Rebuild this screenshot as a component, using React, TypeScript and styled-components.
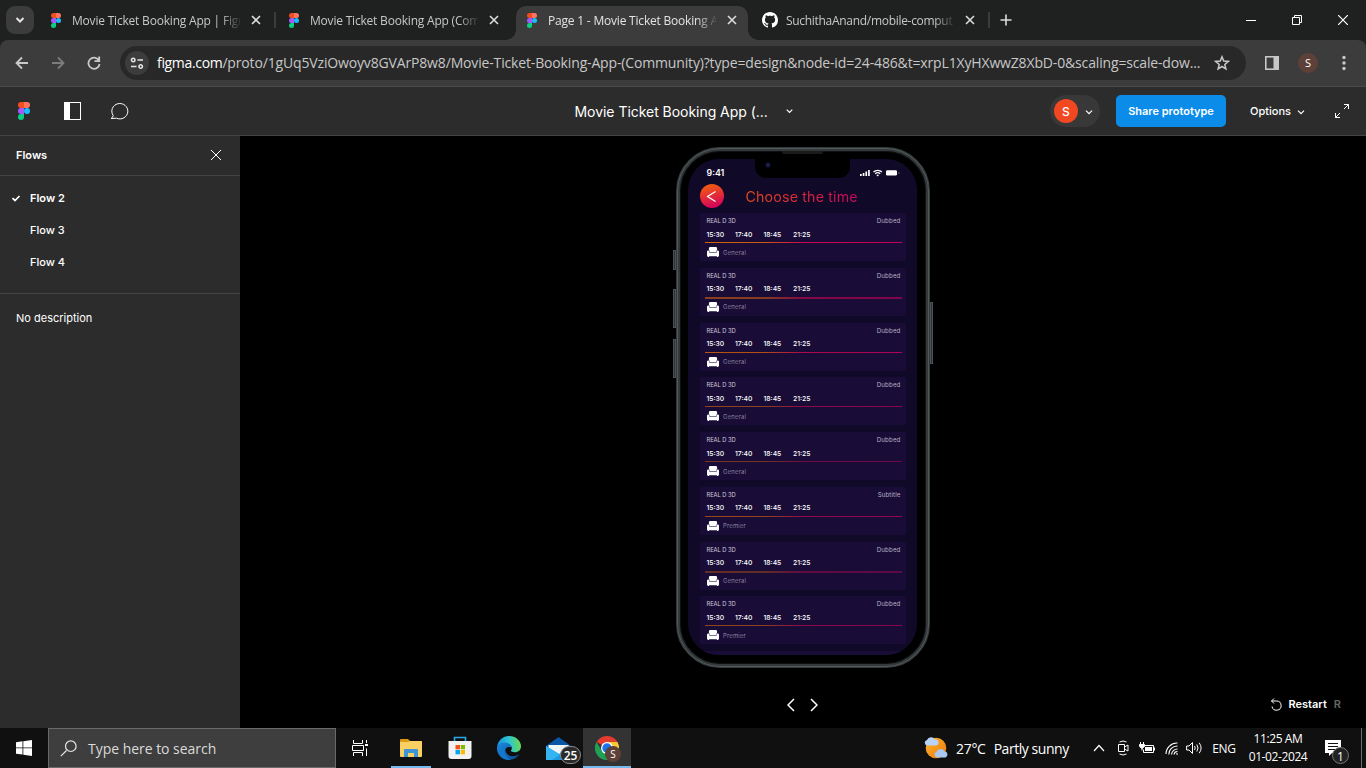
import React from "react";
import styled, { createGlobalStyle, css } from "styled-components";

const ui = `"Open Sans", "Noto Sans", sans-serif`;
const inter = `Inter, "Liberation Sans", sans-serif`;

const GlobalStyle = createGlobalStyle`
  * { box-sizing: border-box; }
  body { margin: 0; background: #000; overflow: hidden; }
  svg { display: block; flex: none; }
`;

const Window = styled.div`
  display: flex;
  flex-direction: column;
  width: 1366px;
  height: 768px;
  overflow: hidden;
  font-family: ${ui};
`;

const Label = styled.span<{ $size: number; $color?: string; $weight?: number; $track?: number; $font?: string }>`
  font-family: ${(p) => p.$font ?? ui};
  font-size: ${(p) => p.$size}px;
  font-weight: ${(p) => p.$weight ?? 400};
  letter-spacing: ${(p) => p.$track ?? 0}px;
  color: ${(p) => p.$color ?? "#fff"};
  white-space: nowrap;
`;

/* ---------- browser tabs ---------- */

const TabStrip = styled.div`
  display: flex;
  height: 40px;
  background: #1f2120;
`;

const TabSearch = styled.div`
  display: grid;
  place-items: center;
  width: 28px;
  height: 28px;
  margin: 6px 4px 0 6px;
  border-radius: 9px;
  background: #3c3c3c;
`;

const Tab = styled.div<{ $active?: boolean; $divider?: boolean }>`
  display: flex;
  align-items: center;
  width: 238px;
  height: 40px;
  padding: 0 0 0 10px;
  position: relative;
  ${(p) =>
    p.$divider &&
    css`
      &::after {
        content: "";
        width: 2px;
        height: 16px;
        margin-left: 10px;
        background: #3c3c3c;
      }
    `}
  ${(p) =>
    p.$active &&
    css`
      z-index: 0;
      &::before {
        content: "";
        position: absolute;
        z-index: -1;
        inset: 6px 4px 0 2px;
        border-radius: 10px 10px 0 0;
        background: #3c3c3c;
      }
    `}
`;

const TabFoot = styled.div<{ $side: "left" | "right" }>`
  position: absolute;
  bottom: 0;
  ${(p) => (p.$side === "left" ? "left: -8px" : "right: -6px")};
  width: 10px;
  height: 10px;
  background: radial-gradient(circle at ${(p) => (p.$side === "left" ? "0 0" : "100% 0")}, transparent 9.5px, #3c3c3c 10px);
`;

const TabTitle = styled.div`
  width: 168px;
  margin-left: 8px;
  overflow: hidden;
  white-space: nowrap;
  line-height: 20px;
  mask-image: linear-gradient(90deg, #000 148px, transparent 170px);
`;

const TabClose = styled.div`
  display: grid;
  place-items: center;
  width: 16px;
  margin-left: 8px;
`;

const NewTab = styled.div`
  display: grid;
  place-items: center;
  width: 32px;
  height: 40px;
`;

const WindowButtons = styled.div`
  display: flex;
  margin-left: auto;
  & > div {
    display: grid;
    place-items: center;
    width: 46px;
    height: 40px;
  }
`;

/* ---------- address bar ---------- */

const ToolbarBack = styled.div`
  background: #1f2120;
  flex: none;
`;

const Toolbar = styled.div`
  display: flex;
  align-items: center;
  height: 47px;
  padding: 0 4px 1px;
  border-radius: 8px 8px 0 0;
  border-bottom: 1px solid #4a4a4a;
  background: #3c3c3c;
`;

const ToolButton = styled.div`
  display: grid;
  place-items: center;
  width: 36px;
  height: 34px;
`;

const Omnibox = styled.div`
  display: flex;
  align-items: center;
  width: 1126px;
  height: 34px;
  margin: 0 8px;
  padding: 0 16px 0 5px;
  border-radius: 17px;
  background: #282828;
`;

const SiteInfo = styled.div`
  display: grid;
  place-items: center;
  width: 24px;
  height: 24px;
  margin-right: 8px;
  border-radius: 50%;
  background: #3c3c3c;
`;

const Url = styled.div`
  flex: 1;
  white-space: nowrap;
  line-height: 24px;
`;

const Avatar = styled.div<{ $d: number; $bg: string }>`
  display: grid;
  place-items: center;
  width: ${(p) => p.$d}px;
  height: ${(p) => p.$d}px;
  border-radius: 50%;
  background: ${(p) => p.$bg};
`;

/* ---------- prototype header ---------- */

const Header = styled.header`
  display: flex;
  align-items: center;
  flex: none;
  height: 49px;
  padding: 0 17px 0 18px;
  border-bottom: 1px solid #444;
  background: #2c2c2c;
`;

const HeaderTools = styled.div`
  display: flex;
  align-items: center;
  width: 556px;
`;

const ToolGap = styled.div<{ $w: number }>`
  width: ${(p) => p.$w}px;
`;

const FileName = styled.div`
  display: flex;
  align-items: center;
  gap: 17px;
  width: 476px;
`;

const FileTitle = styled.div`
  width: 195px;
  line-height: 22px;
  padding: 1px 0 0 0.5px;
`;

const UserPill = styled.div`
  display: flex;
  align-items: center;
  gap: 7px;
  width: 50px;
  height: 32px;
  padding-left: 4px;
  border-radius: 16px;
  background: #383838;
`;

const ShareButton = styled.div`
  display: grid;
  place-items: center;
  width: 110px;
  height: 32px;
  margin: 0 24px 0 16px;
  border-radius: 5px;
  background: #0c8ce9;
`;

const Options = styled.div`
  display: flex;
  align-items: center;
  gap: 6px;
  margin-right: auto;
`;

const Caret = styled.div`
  padding-top: 2px;
`;

/* ---------- workspace ---------- */

const Workspace = styled.div`
  display: flex;
  flex: none;
  height: 592px;
`;

const Sidebar = styled.aside`
  width: 240px;
  background: #2c2c2c;
`;

const SidebarHead = styled.div`
  display: flex;
  align-items: center;
  justify-content: space-between;
  height: 40px;
  padding: 0 18px 1px 16px;
  border-bottom: 1px solid #444;
`;

const FlowList = styled.div`
  height: 118px;
  padding-top: 6px;
  border-bottom: 1px solid #444;
`;

const FlowRow = styled.div`
  display: flex;
  align-items: center;
  height: 32px;
  padding-left: 11px;
`;

const FlowTick = styled.div`
  width: 19px;
`;

const Description = styled.div`
  padding: 16px;
  line-height: 16px;
  display: flex;
`;

const Stage = styled.main`
  display: flex;
  flex-direction: column;
  align-items: center;
  flex: 1;
  padding-top: 11px;
  background: #000;
`;

const Phone = styled.div`
  position: relative;
  width: 254px;
  height: 521px;
  padding: 8px;
  margin-right: 1px;
  border: 4px solid #33393b;
  border-radius: 44px;
  background: #000;
  box-shadow: inset 0 0 0 1px #0d0f10;
  &::before {
    content: "";
    position: absolute;
    inset: -3px;
    border: 1px solid #50585a;
    border-radius: 43px;
  }
`;

const SideKey = styled.div<{ $side: "left" | "right"; $top: number; $h: number }>`
  position: absolute;
  ${(p) => p.$side}: -7px;
  top: ${(p) => p.$top}px;
  width: 3px;
  height: ${(p) => p.$h}px;
  border: 1px solid #4c5254;
  background: #2c3133;
`;

const Speaker = styled.div`
  position: absolute;
  top: 0;
  left: 102px;
  width: 41px;
  height: 3px;
  border-radius: 0 0 2px 2px;
  background: #1b1b1b;
`;

const Screen = styled.div`
  position: relative;
  display: flex;
  flex-direction: column;
  width: 229px;
  height: 496px;
  overflow: hidden;
  border-radius: 31px;
  background: #110928;
`;

const Notch = styled.div`
  position: absolute;
  top: 0;
  left: 67px;
  width: 95px;
  height: 19px;
  border-radius: 0 0 11px 11px;
  background: #000;
`;

const Lens = styled.div`
  position: absolute;
  top: 3px;
  left: 10px;
  width: 6px;
  height: 6px;
  border-radius: 50%;
  background: radial-gradient(circle, #1c2460 15%, #0b0b20 60%, #08080c);
`;

const StatusBar = styled.div`
  display: flex;
  align-items: center;
  justify-content: space-between;
  flex: none;
  height: 25px;
  padding: 2px 16px 0 19px;
`;

const ScreenHead = styled.div`
  display: flex;
  align-items: center;
  flex: none;
  height: 24px;
  padding-left: 12px;
`;

const BackButton = styled.div`
  display: grid;
  place-items: center;
  width: 24px;
  height: 24px;
  margin-right: 22px;
  border-radius: 50%;
  background: linear-gradient(165deg, #f5600d 5%, #d4005c 90%);
`;

const ScreenTitle = styled.div`
  font-family: ${inter};
  font-size: 14.2px;
  font-weight: 400;
  letter-spacing: 0.18px;
  line-height: 20px;
  padding-top: 2px;
  color: transparent;
  background: linear-gradient(90deg, #e04a20, #dc2a38 45%, #c3085a);
  background-clip: text;
  -webkit-background-clip: text;
  white-space: nowrap;
`;

const Cards = styled.div`
  display: flex;
  flex-direction: column;
  flex: none;
  gap: 6.75px;
  padding: 5px 11px 0 12px;
`;

const Card = styled.div`
  display: flex;
  flex-direction: column;
  flex: none;
  height: 48px;
  padding: 3px 4px 0 5px;
  border-radius: 2px;
  background: #190d38;
`;

const CardTop = styled.div`
  display: flex;
  justify-content: space-between;
  height: 9px;
  padding: 0 1px 0 2px;
  line-height: 9px;
`;

const Times = styled.div`
  display: grid;
  grid-template-columns: 28.5px 28.5px 29.5px auto;
  height: 17px;
  padding: 4.6px 0 0 2px;
  line-height: 9px;
`;

const Rule = styled.div<{ $h: number; $alpha: number }>`
  height: ${(p) => p.$h}px;
  margin-bottom: ${(p) => 1 - p.$h}px;
  opacity: ${(p) => p.$alpha};
  background: linear-gradient(90deg, #d65f06 0%, #cd5a12 30%, #cb0550 50%, #c4005b 100%);
`;

const SeatRow = styled.div`
  display: flex;
  align-items: center;
  gap: 4.5px;
  height: 18px;
  padding-left: 2px;
  line-height: 9px;
`;

const StageFooter = styled.div`
  display: grid;
  grid-template-columns: 1fr auto 1fr;
  align-items: center;
  width: 100%;
  margin-top: 24px;
  height: 24px;
  padding: 0 25px 0 24px;
`;

const Pager = styled.div`
  display: flex;
  grid-column: 2;
  gap: 15px;
  padding-top: 1px;
`;

const Restart = styled.div`
  display: flex;
  align-items: center;
  justify-self: end;
  gap: 7px;
`;

/* ---------- taskbar ---------- */

const Taskbar = styled.footer`
  display: flex;
  flex: none;
  height: 40px;
  background: #101010;
`;

const TaskButton = styled.div<{ $w?: number; $active?: boolean; $open?: boolean }>`
  position: relative;
  display: grid;
  place-items: center;
  width: ${(p) => p.$w ?? 49}px;
  height: 40px;
  background: ${(p) => (p.$active ? "#333" : "transparent")};
  ${(p) =>
    (p.$open || p.$active) &&
    css`
      &::after {
        content: "";
        position: absolute;
        left: ${p.$active ? 0 : 6}px;
        right: ${p.$active ? 0 : 5}px;
        bottom: 0;
        height: 2px;
        background: #76b9ed;
      }
    `}
`;

const SearchBox = styled.div`
  display: flex;
  align-items: center;
  gap: 11px;
  width: 288px;
  height: 40px;
  padding-left: 11px;
  border: 1px solid #6a6a6a;
  background: #3e3e3e;
`;

const CountBadge = styled.div`
  position: absolute;
  left: 26px;
  top: 18px;
  display: grid;
  place-items: center;
  width: 21px;
  height: 18px;
  border: 1px solid #888;
  border-radius: 9px;
  background: #2a2a2a;
`;

const ProfileBadge = styled.div`
  position: absolute;
  left: 22px;
  top: 18px;
`;

const Tray = styled.div`
  display: flex;
  align-items: center;
  margin-left: auto;
`;

const TrayItem = styled.div<{ $w: number }>`
  position: relative;
  display: flex;
  align-items: center;
  justify-content: center;
  width: ${(p) => p.$w}px;
  height: 40px;
`;

const Weather = styled.div`
  display: flex;
  align-items: center;
  width: 165px;
`;

const Clock = styled.div`
  display: flex;
  flex-direction: column;
  align-items: center;
  width: 70px;
  line-height: 18px;
  padding-bottom: 1px;
`;

const NoteBadge = styled.div`
  position: absolute;
  left: 19px;
  top: 19px;
  display: grid;
  place-items: center;
  width: 17px;
  height: 17px;
  border: 1px solid #777;
  border-radius: 50%;
  background: #222;
`;

const ShowDesktop = styled.div`
  width: 5px;
  height: 40px;
  border-left: 1px solid #6b6b6b;
`;

/* ---------- drawings ---------- */

const FigmaLogo = ({ h = 15, box = 16 }: { h?: number; box?: number }) => (
  <svg width={box} height={h} viewBox="0 0 20 30">
    <path d="M5 0h5v10H5A5 5 0 0 1 5 0z" fill="#f24e1e" />
    <path d="M10 0h5a5 5 0 0 1 0 10h-5z" fill="#ff7262" />
    <path d="M5 10h5v10H5a5 5 0 0 1 0-10z" fill="#a259ff" />
    <circle cx="15" cy="15" r="5" fill="#1abcfe" />
    <path d="M5 20h5v5a5 5 0 1 1-5-5z" fill="#0acf83" />
  </svg>
);

const GithubLogo = () => (
  <svg width="16" height="16" viewBox="0 0 16 16" fill="#fff">
    <path d="M8 0C3.58 0 0 3.58 0 8c0 3.54 2.29 6.53 5.47 7.59.4.07.55-.17.55-.38 0-.19-.01-.82-.01-1.49-2.01.37-2.53-.49-2.69-.94-.09-.23-.48-.94-.82-1.13-.28-.15-.68-.52-.01-.53.63-.01 1.08.58 1.23.82.72 1.21 1.87.87 2.33.66.07-.52.28-.87.51-1.07-1.78-.2-3.64-.89-3.64-3.95 0-.87.31-1.59.82-2.15-.08-.2-.36-1.02.08-2.12 0 0 .67-.21 2.2.82.64-.18 1.32-.27 2-.27s1.36.09 2 .27c1.53-1.04 2.2-.82 2.2-.82.44 1.1.16 1.92.08 2.12.51.56.82 1.27.82 2.15 0 3.07-1.87 3.75-3.65 3.95.29.25.54.73.54 1.48 0 1.07-.01 1.93-.01 2.2 0 .21.15.46.55.38A8.01 8.01 0 0 0 16 8c0-4.42-3.58-8-8-8z" />
  </svg>
);

const Stroke = ({ w, h, d, color = "#fff", sw = 1 }: { w: number; h: number; d: string; color?: string; sw?: number }) => (
  <svg width={w} height={h} viewBox={`0 0 ${w} ${h}`} fill="none" stroke={color} strokeWidth={sw}>
    <path d={d} />
  </svg>
);

const Chair = () => (
  <svg width="12" height="10" viewBox="0 0 12 10" fill="#fff">
    <path d="M1.900 3V1.400Q1.900 0 3.300 0h5.400q1.400 0 1.400 1.400V3Q9.300 3.600 9.300 5.200H2.700Q2.700 3.600 1.900 3z" />
    <path d="M0 4.800q0-1.200 1.200-1.200T2.400 4.800v1h7.200v-1q0-1.200 1.200-1.200T12 4.800v3.800q0 .6-.6.6V10H9.900V9.200H2.100V10H.6V9.200Q0 9.200 0 8.600z" />
  </svg>
);

const StatusIcons = () => (
  <svg width="41" height="8" viewBox="0 0 41 8" fill="#fff">
    <path d="M0 5h1.700v2H0zM2.700 4h1.700v3H2.700zM5.400 2.500h1.700V7H5.400zM8.100 1h1.700v6H8.100z" />
    <g fill="none" stroke="#fff" strokeWidth="1.300">
      <path d="M13.500 3a6 6 0 0 1 8.400 0M15.200 4.800a3.600 3.600 0 0 1 5 0" />
    </g>
    <path d="M16.400 6a2 2 0 0 1 2.600 0L17.700 7.400z" />
    <rect x="26" y="1.200" width="11" height="5.400" rx="1.400" />
    <path d="M38.600 3v2q1-.3 1-1t-1-1z" opacity=".5" />
  </svg>
);

const FolderIcon = () => (
  <svg width="22" height="19" viewBox="0 0 22 19">
    <path d="M0 1q0-1 1-1h7l2 2h12v5H0z" fill="#dc9a12" />
    <path d="M1 3h7l2-1h11q1 0 1 1v14q0 1-1 1H1q-1 0-1-1V3z" fill="#fbd063" />
    <path d="M4 18v-7q0-1 1-1h12q1 0 1 1v7h-4v-4H8v4z" fill="#3f95d3" />
  </svg>
);

const StoreIcon = () => (
  <svg width="24" height="24" viewBox="0 0 24 24">
    <path d="M6.500 5V1.500h11V5" fill="none" stroke="#28a8e8" strokeWidth="1.600" />
    <path d="M.5 5h23v15q0 3-3 3h-17q-3 0-3-3z" fill="#f1f1f1" />
    <path d="M7.500 9H12v4.300H7.500z" fill="#f25022" />
    <path d="M12.700 9H17v4.300h-4.300z" fill="#7fba00" />
    <path d="M7.500 14H12v4.300H7.500z" fill="#00a4ef" />
    <path d="M12.700 14H17v4.300h-4.300z" fill="#ffb900" />
  </svg>
);

const EdgeIcon = () => (
  <svg width="24" height="24" viewBox="0 0 24 24">
    <defs>
      <linearGradient id="edgeTop" x1="0" x2="1" y1=".5" y2=".4">
        <stop offset="0" stopColor="#1b8fd8" />
        <stop offset=".5" stopColor="#2bc3d8" />
        <stop offset="1" stopColor="#6cdc4c" />
      </linearGradient>
      <linearGradient id="edgeLow" x1="0" x2="1" y1="0" y2="1">
        <stop offset="0" stopColor="#1b8be0" />
        <stop offset="1" stopColor="#0b4a92" />
      </linearGradient>
    </defs>
    <path d="M0 11C.8 4.500 6 0 12 0c7 0 12 5 12 10.300 0 3.700-2.700 6-6 6-2.800 0-4.300-1-4-1.700 1-1.500 1-2.600.6-3.600C13 7 4 5 0 11z" fill="url(#edgeTop)" />
    <path d="M0 11C2 7.500 6 6 9.500 6.800c3 .6 5 2.500 5.200 4.600C9 9.600 7 13.500 9.300 17c3 4 8.400 4 13 1.300C20 22 16 24 12 24 4.500 24-.6 18 0 11z" fill="url(#edgeLow)" />
    <path d="M9.600 10.800C6.500 12.500 6.700 18 10 21.300c1 1 2 1.800 3.600 2.600C6 24.500 1 19 3 14c1.200-2.600 4-3.700 6.600-3.200z" fill="#1478cc" />
  </svg>
);

const MailIcon = () => (
  <svg width="25" height="23" viewBox="0 0 25 23">
    <path d="M0 9 12.500 0 25 9v6H0z" fill="#0a56a6" />
    <path d="M2.500 8h20v6l-10 6-10-6z" fill="#f2f5f8" />
    <path d="M0 9l13 8 12-8v14H0z" fill="#1e9ae4" />
    <path d="M0 9l14 8.500L6 23H0z" fill="#35b4f2" />
  </svg>
);

const ChromeIcon = () => (
  <svg width="24" height="24" viewBox="0 0 24 24">
    <path d="M12 12 1.600 6A12 12 0 0 1 22.400 6H12z" fill="#e33b2e" />
    <path d="M12 6h10.400A12 12 0 0 1 12 24l5.200-9z" fill="#fcc934" />
    <path d="M1.600 6A12 12 0 0 0 12 24l5.200-9L12 12 6.800 15z" fill="#1fa155" />
    <circle cx="12" cy="12" r="6" fill="#fff" />
    <circle cx="12" cy="12" r="4.700" fill="#1a73e8" />
  </svg>
);

const WeatherIcon = () => (
  <svg width="25" height="24" viewBox="0 0 25 24">
    <defs>
      <linearGradient id="sun" x1="0" x2="1" y1="0" y2="1">
        <stop offset="0" stopColor="#fbb72a" />
        <stop offset="1" stopColor="#f0780e" />
      </linearGradient>
    </defs>
    <circle cx="12" cy="12" r="10.300" fill="url(#sun)" />
    <path d="M3 9.500a2.800 2.800 0 0 1 0-5.500 4.500 4.500 0 0 1 8-.5 3 3 0 0 1 1 6z" fill="#b9d2f7" />
    <path d="M13 21.500a3 3 0 0 1-.5-5.800 4.500 4.500 0 0 1 8-.5 3.300 3.300 0 0 1 1 6.300z" fill="#a9c8f4" />
  </svg>
);

/* ---------- content ---------- */

const tabs = [
  { title: "Movie Ticket Booking App | Figm", track: -0.2, divider: true },
  { title: "Movie Ticket Booking App (Com", track: -0.2 },
  { title: "Page 1 - Movie Ticket Booking A", track: -0.2, active: true },
  { title: "SuchithaAnand/mobile-comput", track: -0.3, github: true, divider: true },
];

const sessions = [
  { version: "Dubbed", seat: "General", rule: 1, alpha: 1 },
  { version: "Dubbed", seat: "General", rule: 2, alpha: 0.6 },
  { version: "Dubbed", seat: "General", rule: 1, alpha: 0.85 },
  { version: "Dubbed", seat: "General", rule: 1, alpha: 0.65 },
  { version: "Dubbed", seat: "General", rule: 1, alpha: 0.5 },
  { version: "Subtitle", seat: "Premier", rule: 1, alpha: 0.7 },
  { version: "Dubbed", seat: "General", rule: 2, alpha: 0.4 },
  { version: "Dubbed", seat: "Premier", rule: 1, alpha: 0.65 },
];

const times = ["15:30", "17:40", "18:45", "21:25"];

const BrowserTabs = () => (
  <TabStrip>
    <TabSearch>
      <Stroke w={10} h={8} d="M1.500 2 5 5.500 8.500 2" color="#e3e3e3" sw={2} />
    </TabSearch>
    {tabs.map((t) => (
      <Tab key={t.title} $active={t.active} $divider={t.divider}>
        {t.active && (
          <>
            <TabFoot $side="left" />
            <TabFoot $side="right" />
          </>
        )}
        {t.github ? <GithubLogo /> : <FigmaLogo />}
        <TabTitle>
          <Label $size={12} $track={t.track} $color={t.active ? "#e3e3e3" : "#c7c7c7"}>{t.title}</Label>
        </TabTitle>
        <TabClose>
          <Stroke w={10} h={10} d="M1 1l8 8M9 1l-8 8" color="#dcdcdc" sw={1.6} />
        </TabClose>
      </Tab>
    ))}
    <NewTab>
      <Stroke w={12} h={12} d="M6 .5v11M.5 6h11" color="#dcdcdc" sw={1.6} />
    </NewTab>
    <WindowButtons>
      <div><Stroke w={10} h={2} d="M0 1.500h10" /></div>
      <div><Stroke w={10} h={10} d="M.5 2.500h7v7h-7zM2.500 2.500v-2h7v7h-2" /></div>
      <div><Stroke w={10} h={10} d="M0 0l10 10M10 0 0 10" sw={1.2} /></div>
    </WindowButtons>
  </TabStrip>
);

const AddressBar = () => (
  <ToolbarBack>
    <Toolbar>
      <ToolButton><Stroke w={14} h={14} d="M13 7H2M7 1.500 1.500 7 7 12.500" color="#c9c9c9" sw={1.8} /></ToolButton>
      <ToolButton><Stroke w={14} h={14} d="M1 7h11M7 1.500 12.500 7 7 12.500" color="#7c7c7c" sw={1.8} /></ToolButton>
      <ToolButton><Stroke w={14} h={14} d="M11.800 4.200A5.600 5.600 0 1 0 12.600 8M12.200.5v4.700H7.500" color="#c9c9c9" sw={1.8} /></ToolButton>
      <Omnibox>
        <SiteInfo>
          <Stroke w={14} h={12} d="M7.500 3H13M1 9.500h5.500M1.500 3a1.700 1.700 0 1 0 3.400 0a1.700 1.700 0 1 0-3.400 0M9 9.500a1.700 1.700 0 1 0 3.400 0a1.700 1.700 0 1 0-3.400 0" color="#e3e3e3" sw={1.6} />
        </SiteInfo>
        <Url>
          <Label $size={14} $track={-0.33} $color="#fff">figma.com</Label>
          <Label $size={14} $track={-0.155} $color="#c7c7c7">
            /proto/1gUq5VziOwoyv8GVArP8w8/Movie-Ticket-Booking-App-(Community)?type=design&amp;node-id=24-486&amp;t=xrpL1XyHXwwZ8XbD-0&amp;scaling=scale-dow...
          </Label>
        </Url>
        <Stroke w={16} h={16} d="M8 1.800 9.700 6.100l4.600.3-3.500 3 1.100 4.500L8 11.500l-3.900 2.400 1.100-4.500-3.500-3 4.600-.3z" color="#c9c9c9" sw={1.5} />
      </Omnibox>
      <ToolButton>
        <svg width="14" height="14" viewBox="0 0 14 14">
          <rect x="0.800" y="0.800" width="12.400" height="12.400" fill="none" stroke="#c7c7c7" strokeWidth="1.600" />
          <rect x="8.500" y="1" width="5" height="12" fill="#c7c7c7" />
        </svg>
      </ToolButton>
      <ToolButton>
        <Avatar $d={20} $bg="#5d4037"><Label $size={11}>S</Label></Avatar>
      </ToolButton>
      <ToolButton>
        <svg width="4" height="16" viewBox="0 0 4 16" fill="#c9c9c9">
          <circle cx="2" cy="2.500" r="1.700" /><circle cx="2" cy="8" r="1.700" /><circle cx="2" cy="13.500" r="1.700" />
        </svg>
      </ToolButton>
    </Toolbar>
  </ToolbarBack>
);

const PrototypeHeader = () => (
  <Header>
    <HeaderTools>
      <FigmaLogo h={18} box={12} />
      <ToolGap $w={34} />
      <svg width="17" height="18" viewBox="0 0 17 18">
        <rect x=".5" y=".5" width="16" height="17" fill="none" stroke="#fff" />
        <rect width="6" height="18" fill="#fff" />
      </svg>
      <ToolGap $w={29} />
      <Stroke w={19} h={18} d="M3.200 13.500A8 7.700 0 1 1 6.500 16.200L1 16.500Q3 15.500 3.200 13.500z" />
    </HeaderTools>
    <FileName>
      <FileTitle><Label $font={inter} $size={14} $track={-0.04}>Movie Ticket Booking App (...</Label></FileTitle>
      <Stroke w={7} h={5} d="M.7.700 3.500 3.500 6.300.700" sw={1.2} />
    </FileName>
    <UserPill>
      <Avatar $d={24} $bg="#f24822"><Label $font={inter} $size={12} $weight={500}>S</Label></Avatar>
      <Caret><Stroke w={8} h={5} d="M1 .7 4 3.700 7 .7" sw={1.2} /></Caret>
    </UserPill>
    <ShareButton><Label $font={inter} $size={11} $weight={600}>Share prototype</Label></ShareButton>
    <Options>
      <Label $font={inter} $size={11} $weight={500}>Options</Label>
      <Caret><Stroke w={8} h={5} d="M1 .7 4 3.700 7 .7" sw={1.2} /></Caret>
    </Options>
    <Stroke w={14} h={14} d="M9 5l4.500-4.500M9 .5h4.500V5M5 9 .5 13.500M.5 9v4.500H5" />
  </Header>
);

const PhonePreview = () => (
  <Phone>
    <SideKey $side="left" $top={99} $h={20} />
    <SideKey $side="left" $top={138} $h={39} />
    <SideKey $side="left" $top={188} $h={39} />
    <SideKey $side="right" $top={151} $h={62} />
    <Speaker />
    <Screen>
      <Notch><Lens /></Notch>
      <StatusBar>
        <Label $font={inter} $size={8.8} $weight={600}>9:41</Label>
        <StatusIcons />
      </StatusBar>
      <ScreenHead>
        <BackButton><Stroke w={11} h={13} d="M9.500 1.500 1.500 6.500 9.500 11.500" sw={1.2} /></BackButton>
        <ScreenTitle>Choose the time</ScreenTitle>
      </ScreenHead>
      <Cards>
        {sessions.map((s, i) => (
          <Card key={i}>
            <CardTop>
              <Label $font={inter} $size={5.8} $color="#cfcad8" $track={-0.05}>REAL D 3D</Label>
              <Label $font={inter} $size={6.2} $color="#b5afc4" $track={0.1}>{s.version}</Label>
            </CardTop>
            <Times>
              {times.map((t) => (
                <Label key={t} $font={inter} $size={6.8} $weight={500}>{t}</Label>
              ))}
            </Times>
            <Rule $h={s.rule} $alpha={s.alpha} />
            <SeatRow>
              <Chair />
              <Label $font={inter} $size={6} $weight={300} $track={0.2} $color="#a9a3ba">{s.seat}</Label>
            </SeatRow>
          </Card>
        ))}
        <Card />
      </Cards>
    </Screen>
  </Phone>
);

const App = () => (
  <Window>
    <GlobalStyle />
    <BrowserTabs />
    <AddressBar />
    <PrototypeHeader />
    <Workspace>
      <Sidebar>
        <SidebarHead>
          <Label $font={inter} $size={11} $weight={600}>Flows</Label>
          <Stroke w={12} h={12} d="M1 1l10 10M11 1 1 11" />
        </SidebarHead>
        <FlowList>
          {["Flow 2", "Flow 3", "Flow 4"].map((f, i) => (
            <FlowRow key={f}>
              <FlowTick>{i === 0 && <Stroke w={10} h={7} d="M1.500 3.200 4 5.500 8.500 1" sw={1.7} />}</FlowTick>
              <Label $font={inter} $size={11} $weight={i === 0 ? 600 : 500}>{f}</Label>
            </FlowRow>
          ))}
        </FlowList>
        <Description><Label $font={inter} $size={11}>No description</Label></Description>
      </Sidebar>
      <Stage>
        <PhonePreview />
        <StageFooter>
          <Pager>
            <Stroke w={8} h={14} d="M7 1 1 7l6 6" sw={1.5} />
            <Stroke w={8} h={14} d="M1 1l6 6-6 6" sw={1.5} />
          </Pager>
          <Restart>
            <Stroke w={12} h={13} d="M4 .5 1.500 3 4 5.500M1.500 3H6.500a4.600 4.600 0 1 1-4.500 5.500" />
            <Label $font={inter} $size={11} $weight={600}>Restart</Label>
            <Label $font={inter} $size={11} $weight={600} $color="#666">R</Label>
          </Restart>
        </StageFooter>
      </Stage>
    </Workspace>
    <Taskbar>
      <TaskButton $w={48}>
        <svg width="16" height="16" viewBox="0 0 16 16" fill="#fff">
          <path d="M0 2.200 6.500 1.300v6.200H0zM7.300 1.200 16 0v7.500H7.300zM0 8.300h6.500v6.300L0 13.700zM7.300 8.300H16V16l-8.700-1.300z" />
        </svg>
      </TaskButton>
      <SearchBox>
        <Stroke w={17} h={17} d="M6.500 10.500.8 16.200M5.500 6.200a5.300 5.300 0 1 0 10.600 0a5.300 5.300 0 1 0-10.600 0" color="#e6e6e6" sw={1.2} />
        <Label $size={14} $track={-0.03} $color="#dadada">Type here to search</Label>
      </SearchBox>
      <TaskButton>
        <Stroke w={17} h={16} d="M1.500 0v3.500h9V0M1.500 16v-3.500h9V16M.500 5.500h11v5H.500zM14.500 0v3M14.500 8.500V16M13 4.500h3M13 5.500h3" />
      </TaskButton>
      <TaskButton $w={51} $open><FolderIcon /></TaskButton>
      <TaskButton $w={48}><StoreIcon /></TaskButton>
      <TaskButton $w={50}><EdgeIcon /></TaskButton>
      <TaskButton $w={49}>
        <MailIcon />
        <CountBadge><Label $size={12} $weight={600}>25</Label></CountBadge>
      </TaskButton>
      <TaskButton $w={48} $active>
        <ChromeIcon />
        <ProfileBadge><Avatar $d={16} $bg="#5d4037"><Label $size={10}>S</Label></Avatar></ProfileBadge>
      </TaskButton>
      <Tray>
        <Weather>
          <WeatherIcon />
          <ToolGap $w={7} />
          <Label $size={14} $track={-0.3}>27°C</Label>
          <ToolGap $w={8} />
          <Label $size={14} $track={-0.45}>Partly sunny</Label>
        </Weather>
        <TrayItem $w={20}><Stroke w={12} h={8} d="M1 7l5-5.500L11 7" sw={1.2} /></TrayItem>
        <TrayItem $w={27}><Stroke w={12} h={16} d="M1.500 4.500h6v7h-6zM7.500 7l3.500-2v6L7.500 9M2.500 2q3.500-2 7 0M2.500 14q3.500 2 7 0" /></TrayItem>
        <TrayItem $w={22}>
          <svg width="16" height="12" viewBox="0 0 16 12" fill="none" stroke="#fff">
            <path d="M5.500 3.500h9v7h-10V7.500M1.500 0v2.500M4.500 0v2.500M3 6v2.500" />
            <path d="M.5 2.500h5v2L3 6.500.5 4.500z" fill="#fff" />
            <rect x="6.500" y="5.500" width="6" height="3" fill="#fff" />
            <path d="M15.500 5.500v3" />
          </svg>
        </TrayItem>
        <TrayItem $w={26}><Stroke w={13} h={13} d="M1 12A11 11 0 0 1 12.500 1M3.800 12.500A8.500 8.500 0 0 1 12.500 4M6.500 12.500a6 6 0 0 1 6-5.500M9 12.500a3.500 3.500 0 0 1 3.500-3M11 12h2" sw={1.1} /></TrayItem>
        <TrayItem $w={21}><Stroke w={17} h={14} d="M.6 5v4H3l3.500 3.500V1.500L3 5zM8.500 5q1.500 2 0 4M10.800 3.500q2.500 3.500 0 7M13.200 1.800q3.800 5.200 0 10.400" /></TrayItem>
        <TrayItem $w={38}><Label $size={12} $track={-0.3}>ENG</Label></TrayItem>
        <Clock>
          <Label $size={12} $track={-0.4}>11:25 AM</Label>
          <Label $size={12} $track={-0.4}>01-02-2024</Label>
        </Clock>
        <TrayItem $w={40}>
          <svg width="16" height="16" viewBox="0 0 16 16">
            <path d="M0 0h16v13H7l-3 3v-3H0z" fill="#fff" />
            <path d="M3 3.500h10M3 6.500h10M3 9.500h7" stroke="#111" />
          </svg>
          <NoteBadge><Label $size={12}>1</Label></NoteBadge>
        </TrayItem>
        <ToolGap $w={8} />
        <ShowDesktop />
      </Tray>
    </Taskbar>
  </Window>
);

export default App;
